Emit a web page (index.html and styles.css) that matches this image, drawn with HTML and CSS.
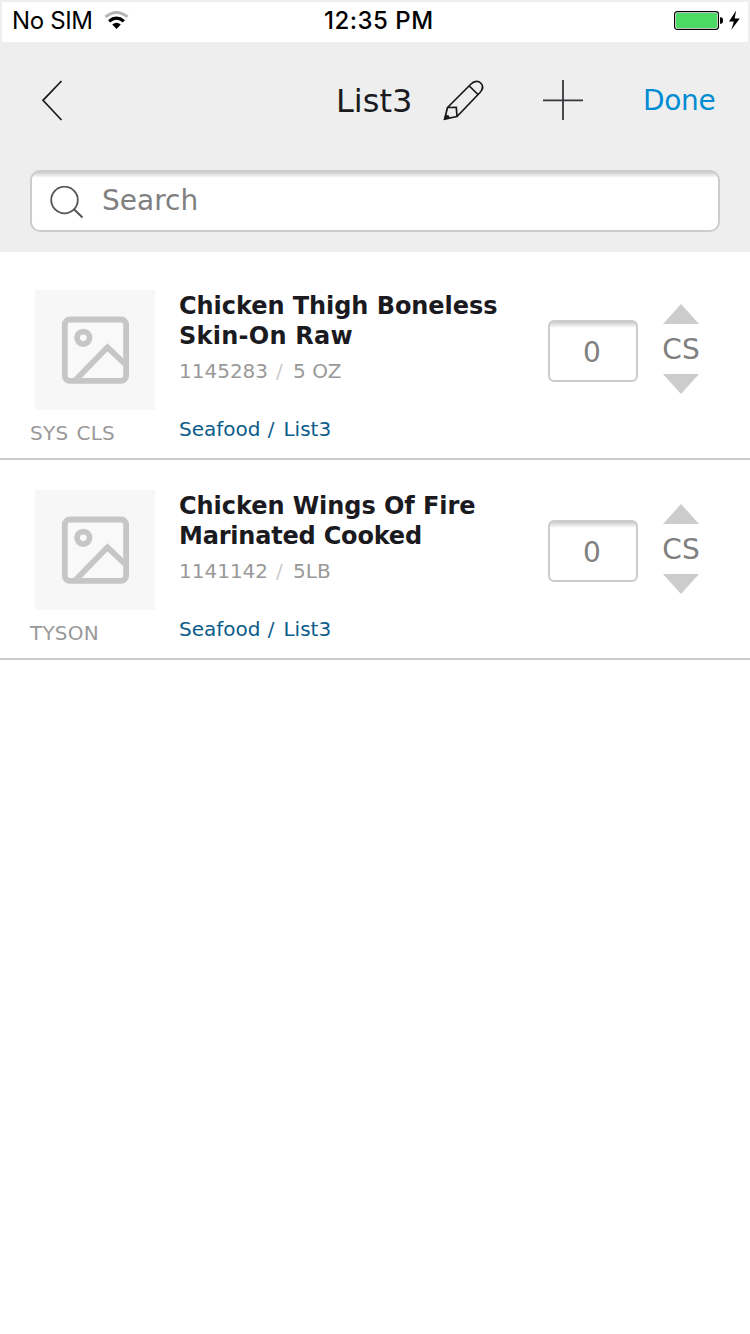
FILE: index.html
```html
<!DOCTYPE html>
<html lang="en">
<head>
<meta charset="utf-8">
<title>List3</title>
<link rel="stylesheet" href="styles.css">
</head>
<body>
<svg class="defs" aria-hidden="true">
  <symbol id="placeholder" viewBox="0 0 120 120">
    <rect x="29.800" y="29.500" width="61.300" height="61.300" rx="5" fill="#f9f9f9" stroke="#c6c6c6" stroke-width="5.800"/>
    <circle cx="48.300" cy="47.800" r="6.200" fill="none" stroke="#c6c6c6" stroke-width="5.800"/>
    <path d="M40 90.500L72.500 57.300L90 74" fill="none" stroke="#c6c6c6" stroke-width="5.800"/>
  </symbol>
</svg>
<div class="status">
  <span class="carrier">No SIM</span>
  <svg class="wifi" width="26" height="20" viewBox="0 0 26 20">
    <path d="M1.500 6.900Q12.500-2 23.500 6.900" fill="none" stroke="#b5b5b5" stroke-width="3"/>
    <path d="M5.100 11.200Q12.500 5.200 19.900 11.200" fill="none" stroke="#000" stroke-width="3.200"/>
    <path d="M8.200 14.400Q12.500 11.200 16.800 14.400L12.500 19Z" fill="#000"/>
  </svg>
  <span class="clock">12:35 PM</span>
  <svg class="battery" width="68" height="22" viewBox="0 0 68 22">
    <rect x="1.600" y="1.600" width="43.800" height="17.800" rx="2.600" fill="#fff" stroke="#000" stroke-width="1.200"/>
    <rect x="3" y="3" width="41" height="15" rx="1.200" fill="#4cd964"/>
    <path d="M47 7.200h.8q2.200 0 2.200 3.300t-2.200 3.300H47z" fill="#000"/>
    <path d="M63.200.4L56 11.400h4.800L58.400 19.800L66.800 8.400H61.600z" fill="#000"/>
  </svg>
</div>
<header class="header">
  <nav class="nav">
    <svg class="back" width="24" height="44" viewBox="0 0 24 44"><path d="M21.500 3L3 22.300L21.500 42" fill="none" stroke="#1a1a1c" stroke-width="1.700"/></svg>
    <h1 class="title">List3</h1>
    <svg class="pencil" width="44" height="44" viewBox="0 0 44 44">
      <path d="M5.500 29.500L29 6C32.500 2.500 36.500 2.800 38.700 5S41.300 10.800 38 14.500L15 38.500L2.600 41.200ZM27.300 8L36.500 17M5.500 29.500L14.300 29.300L15 38.500" fill="none" stroke="#1a1a1c" stroke-width="1.700"/>
      <path d="M3.300 36.800L7 37.500L7.600 40.600L1.700 42Z" fill="#1a1a1c"/>
    </svg>
    <svg class="plus" width="40" height="40" viewBox="0 0 40 40"><path d="M20 0V40M0 20.300H40" fill="none" stroke="#35363b" stroke-width="1.800"/></svg>
    <span class="done">Done</span>
  </nav>
  <div class="search">
    <svg width="36" height="36" viewBox="0 0 36 36"><circle cx="15.500" cy="14" r="13.300" fill="none" stroke="#555" stroke-width="1.800"/><path d="M25 23.300L33.500 31.500" stroke="#555" stroke-width="2"/></svg>
    <span class="placeholder">Search</span>
  </div>
</header>
<main class="list">
  <article class="item">
    <div class="media">
      <svg class="thumb" width="120" height="120"><use href="#placeholder"/></svg>
      <span class="brand brand-spaced">SYS CLS</span>
    </div>
    <div class="info">
      <h2 class="name"><span class="line-thigh">Chicken Thigh Boneless</span><br><span class="line-skin">Skin-On Raw</span></h2>
      <p class="meta">1145283 <span class="slash">/</span> 5 OZ</p>
      <p class="category">Seafood <span class="divider">/</span> List3</p>
    </div>
    <div class="quantity">0</div>
    <div class="unit">
      <svg width="36" height="20" viewBox="0 0 36 20"><path d="M18 0L36 20H0Z" fill="#ccc"/></svg>
      <span>CS</span>
      <svg width="36" height="20" viewBox="0 0 36 20"><path d="M0 0H36L18 20Z" fill="#ccc"/></svg>
    </div>
  </article>
  <article class="item">
    <div class="media">
      <svg class="thumb" width="120" height="120"><use href="#placeholder"/></svg>
      <span class="brand brand-single">TYSON</span>
    </div>
    <div class="info">
      <h2 class="name"><span class="line-thigh">Chicken Wings Of Fire</span><br><span class="line-marinated">Marinated Cooked</span></h2>
      <p class="meta">1141142 <span class="slash">/</span> 5LB</p>
      <p class="category">Seafood <span class="divider">/</span> List3</p>
    </div>
    <div class="quantity">0</div>
    <div class="unit">
      <svg width="36" height="20" viewBox="0 0 36 20"><path d="M18 0L36 20H0Z" fill="#ccc"/></svg>
      <span>CS</span>
      <svg width="36" height="20" viewBox="0 0 36 20"><path d="M0 0H36L18 20Z" fill="#ccc"/></svg>
    </div>
  </article>
</main>
</body>
</html>
```
FILE: styles.css
```css
* { box-sizing: border-box; }
body { margin: 0; width: 750px; height: 1334px; overflow: hidden; background: #fff; font-family: Verdana, "DejaVu Sans", sans-serif; color: #1a1a1f; white-space: nowrap; }
svg { display: block; flex: none; }
h1, h2, p { margin: 0; }
.defs { width: 0; height: 0; position: absolute; }
.status { height: 42px; border: 2px solid #eee; border-bottom: 0; display: grid; grid-template-columns: 91px 220px 1fr 75px; font: 24px/38px Inter, sans-serif; color: #000; }
.carrier { padding-left: 10px; letter-spacing: -.35px; }
.wifi { margin: 8px 0 0 11px; }
.clock { padding-left: 11px; font-weight: 500; letter-spacing: .5px; }
.battery { margin-top: 8px; }
.header { height: 210px; background: #eee; padding: 28px 30px 0; }
.nav { height: 60px; display: flex; align-items: center; }
.back { margin-left: 10px; }
.title { margin-left: 272px; width: 78px; font-size: 32px; font-weight: 400; line-height: 58px; padding-top: 2px; }
.pencil { margin-left: 28px; }
.plus { margin-left: 57px; }
.done { margin-left: 60px; font-size: 28px; letter-spacing: -.3px; color: #008cd2; }
.search { margin-top: 40px; height: 62px; border: 2px solid #ccc; border-radius: 10px; background: linear-gradient(#ccc, #fff 6px); display: flex; padding: 14px 0 0 17px; }
.placeholder { margin: -2px 0 0 17px; font-size: 28px; line-height: 34px; color: #808080; }
.list { padding-top: 8px; }
.item { height: 200px; border-bottom: 2px solid #ccc; display: flex; padding-left: 30px; }
.media { width: 149px; padding-top: 30px; }
.thumb { margin-left: 5px; background: #f7f7f7; }
.brand { display: block; font-size: 20px; line-height: 24px; margin-top: 11px; color: #999; }
.brand-spaced { letter-spacing: .25px; word-spacing: 1.5px; }
.brand-single { letter-spacing: .2px; }
.info { width: 369px; padding-top: 31px; }
.name { font-size: 24px; line-height: 30px; font-weight: 700; }
.line-thigh { letter-spacing: -.06px; }
.line-skin { letter-spacing: .25px; }
.line-marinated { letter-spacing: -.2px; }
.meta { font-size: 20px; line-height: 24px; margin-top: 8px; color: #999; }
.slash { color: #ccc; margin: 0 4px 0 1.5px; }
.category { font-size: 20px; line-height: 24px; margin-top: 34px; color: #0b5c8a; }
.divider { margin: 0 2.500px 0 1px; }
.quantity { width: 90px; height: 62px; margin-top: 60px; border: 2px solid #ccc; border-radius: 6px; background: linear-gradient(#ccc, #fff 6px); font-size: 28px; line-height: 62px; text-align: center; padding-right: 2px; color: #808080; }
.unit { width: 86px; padding-top: 44px; display: flex; flex-direction: column; align-items: center; font-size: 28px; color: #808080; }
.unit span { height: 50px; line-height: 52px; }
```
